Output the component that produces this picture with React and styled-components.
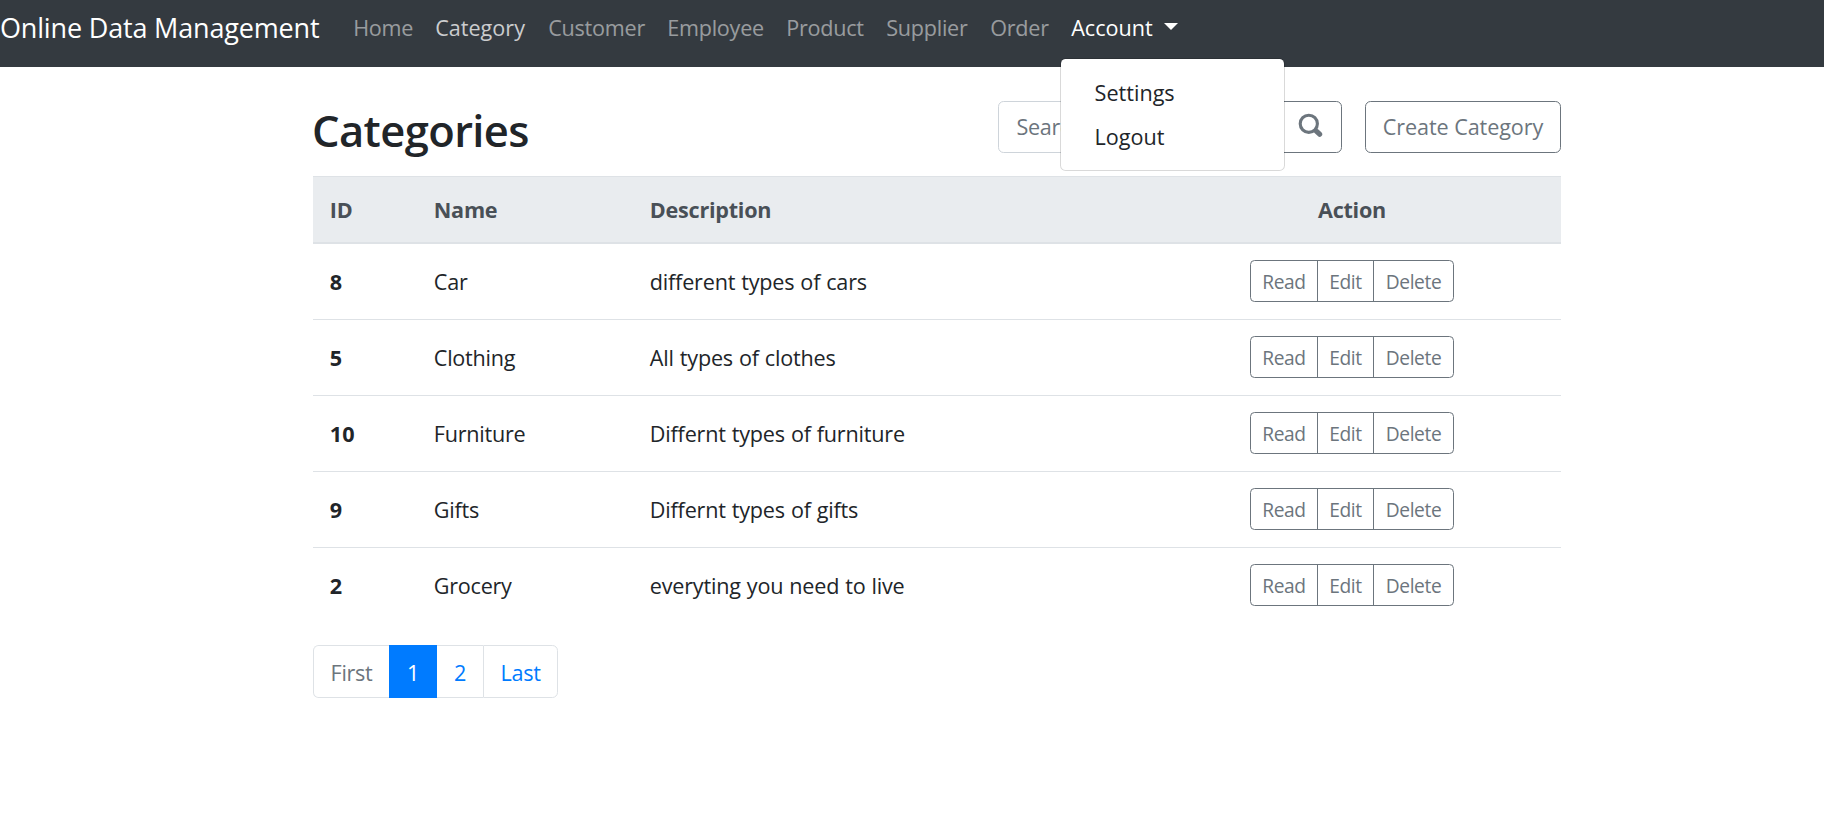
import React from "react";
import styled, { createGlobalStyle } from "styled-components";

const GlobalStyle = createGlobalStyle`
  *, *::before, *::after { box-sizing: border-box; }
  html, body { margin: 0; padding: 0; background: #fff; overflow: hidden; }
  body {
    font-family: "Segoe UI", "Open Sans", "Noto Sans", sans-serif;
    font-size: 21.6px;
    line-height: 33.6px;
    letter-spacing: -0.3px;
    color: #212529;
  }
  button, input { font: inherit; letter-spacing: inherit; }
  a { text-decoration: none; color: inherit; }
`;

const Navbar = styled.nav`
  display: flex;
  align-items: flex-start;
  height: 67px;
  background: #343a40;
  white-space: nowrap;
`;

const Brand = styled.a`
  width: 342px;
  padding-top: 7px;
  font-size: 27px;
  line-height: 42px;
  letter-spacing: -0.17px;
  color: #fff;
`;

const NavList = styled.ul`
  display: flex;
  margin: 0;
  padding: 0;
  list-style: none;
`;

const NavItem = styled.li`
  position: relative;
  width: ${(p) => p.$width}px;
`;

const NavLink = styled.a`
  display: flex;
  align-items: center;
  padding: 11px 11.2px;
  letter-spacing: ${(p) => (p.$active || p.$hover ? 0 : -0.25)}px;
  color: ${(p) => (p.$active ? "#fff" : p.$hover ? "rgba(255,255,255,.75)" : "rgba(255,255,255,.5)")};
`;

const Caret = styled.span`
  margin: -3px 0 0 11px;
  border-top: 7px solid currentColor;
  border-left: 7px solid transparent;
  border-right: 7px solid transparent;
`;

const Menu = styled.div`
  position: absolute;
  z-index: 10;
  top: 58px;
  left: 0;
  width: 225px;
  height: 113px;
  padding: 11.5px 0;
  background: #fff;
  background-clip: padding-box;
  border: 1px solid rgba(0, 0, 0, 0.15);
  border-radius: 5.6px;
`;

const MenuItem = styled.a`
  display: block;
  padding: 5.3px 33.6px;
  letter-spacing: 0;
  color: #212529;
`;

const Container = styled.main`
  width: 1248px;
  margin-left: 313px;
  padding-top: 34px;
`;

const Heading = styled.header`
  display: flex;
  align-items: flex-start;
  height: 75px;
`;

const Title = styled.h2`
  flex: 1;
  margin: 3px 0 0 -1px;
  font-size: 43.5px;
  line-height: 54px;
  font-weight: 600;
  letter-spacing: -0.6px;
`;

const SearchGroup = styled.div`
  display: flex;
  width: 344px;
  height: 52px;
  margin-right: 23px;
`;

const SearchInput = styled.input`
  flex: 1;
  min-width: 0;
  padding: 0 17.5px;
  color: #495057;
  border: 1px solid #ced4da;
  border-radius: 5.6px 0 0 5.6px;
  outline: none;
  &::placeholder { color: #6c757d; opacity: 1; }
`;

const OutlineButton = styled.button`
  display: flex;
  align-items: center;
  justify-content: center;
  width: ${(p) => p.$width}px;
  height: 52px;
  padding: 0;
  white-space: nowrap;
  letter-spacing: -0.1px;
  color: #6c757d;
  background: #fff;
  border: 1px solid #6c757d;
  border-radius: 5.6px;
`;

const SearchButton = styled(OutlineButton)`
  margin-left: -1px;
  padding: 0 1px 4px 0;
  border-radius: 0 5.6px 5.6px 0;
`;

const Table = styled.table`
  width: 100%;
  table-layout: fixed;
  border-collapse: collapse;
`;

const Column = styled.col`
  width: ${(p) => p.$width}px;
`;

const HeadCell = styled.th`
  height: 67px;
  padding: 0 16.8px;
  text-align: ${(p) => (p.$center ? "center" : "left")};
  font-weight: 700;
  letter-spacing: -0.25px;
  color: #495057;
  background: #e9ecef;
  box-shadow: inset 0 1px #dee2e6, inset 0 -1px #dee2e6;
`;

const Row = styled.tr`
  height: 76px;
  box-shadow: inset 0 1px #dee2e6;
`;

const Cell = styled.td`
  padding: 1px 16.8px 0;
  font-weight: ${(p) => (p.$bold ? 700 : 400)};
  letter-spacing: ${(p) => p.$track ?? 0}px;
  word-spacing: 0.6px;
`;

const ActionCell = styled(Cell)`
  padding-top: 0;
`;

const ButtonGroup = styled.div`
  display: flex;
  width: 204px;
  height: 42px;
  margin: 0 auto;
  border: 1px solid #6c757d;
  border-radius: 4.5px;
`;

const SmallButton = styled.button`
  width: ${(p) => p.$width}px;
  padding: 1px 0 0;
  font-size: 19.2px;
  line-height: 39px;
  letter-spacing: -0.4px;
  word-spacing: 0;
  color: #6c757d;
  background: none;
  border: 0;
  & + & { border-left: 1px solid #6c757d; }
`;

const Pagination = styled.ul`
  display: flex;
  width: 245px;
  height: 53px;
  margin: 22px 0 0;
  padding: 0;
  list-style: none;
`;

const PageItem = styled.li`
  display: flex;
  align-items: center;
  justify-content: center;
  width: ${(p) => p.$width}px;
  padding-top: 2px;
  color: ${(p) => (p.$active ? "#fff" : p.$disabled ? "#6c757d" : "#007bff")};
  background: ${(p) => (p.$active ? "#007bff" : "#fff")};
  border: 1px solid ${(p) => (p.$active ? "#007bff" : "#dee2e6")};
  ${(p) => (p.$active ? "" : "border-left-width: " + (p.$afterActive ? 0 : 1) + "px; border-right-width: " + (p.$last ? 1 : 0) + "px;")}
  &:first-child { border-radius: 5.6px 0 0 5.6px; }
  &:last-child { border-radius: 0 5.6px 5.6px 0; }
`;

const links = [
  { label: "Home", width: 82 },
  { label: "Category", width: 113, hover: true },
  { label: "Customer", width: 119 },
  { label: "Employee", width: 119 },
  { label: "Product", width: 100 },
  { label: "Supplier", width: 104 },
  { label: "Order", width: 81 },
];

const categories = [
  { id: 8, name: "Car", description: "different types of cars" },
  { id: 5, name: "Clothing", description: "All types of clothes" },
  { id: 10, name: "Furniture", description: "Differnt types of furniture" },
  { id: 9, name: "Gifts", description: "Differnt types of gifts" },
  { id: 2, name: "Grocery", description: "everyting you need to live" },
];

function SearchIcon() {
  return (
    <svg width="26" height="26" viewBox="0 0 26 26" fill="none" stroke="currentColor">
      <circle cx="11.8" cy="11.8" r="8.6" strokeWidth="3.1" />
      <path d="M19.6 19.4L22.6 22.2" strokeWidth="5.2" strokeLinecap="round" />
    </svg>
  );
}

export default function App() {
  return (
    <>
      <GlobalStyle />
      <Navbar>
        <Brand href="#">Online Data Management</Brand>
        <NavList>
          {links.map((l) => (
            <NavItem key={l.label} $width={l.width}>
              <NavLink href="#" $hover={l.hover}>{l.label}</NavLink>
            </NavItem>
          ))}
          <NavItem $width={130}>
            <NavLink href="#" $active>Account<Caret /></NavLink>
            <Menu>
              <MenuItem href="#">Settings</MenuItem>
              <MenuItem href="#">Logout</MenuItem>
            </Menu>
          </NavItem>
        </NavList>
      </Navbar>
      <Container>
        <Heading>
          <Title>Categories</Title>
          <SearchGroup>
            <SearchInput placeholder="Search" />
            <SearchButton $width={63} aria-label="Search"><SearchIcon /></SearchButton>
          </SearchGroup>
          <OutlineButton $width={196}>Create Category</OutlineButton>
        </Heading>
        <Table>
          <colgroup>
            <Column $width={104} />
            <Column $width={216} />
            <Column $width={510} />
            <Column $width={418} />
          </colgroup>
          <thead>
            <tr>
              <HeadCell>ID</HeadCell>
              <HeadCell>Name</HeadCell>
              <HeadCell>Description</HeadCell>
              <HeadCell $center>Action</HeadCell>
            </tr>
          </thead>
          <tbody>
            {categories.map((c) => (
              <Row key={c.id}>
                <Cell $bold>{c.id}</Cell>
                <Cell $track={-0.25}>{c.name}</Cell>
                <Cell $track={-0.2}>{c.description}</Cell>
                <ActionCell>
                  <ButtonGroup>
                    <SmallButton $width={66}>Read</SmallButton>
                    <SmallButton $width={56}>Edit</SmallButton>
                    <SmallButton $width={80}>Delete</SmallButton>
                  </ButtonGroup>
                </ActionCell>
              </Row>
            ))}
          </tbody>
        </Table>
        <Pagination>
          <PageItem $width={76} $disabled>First</PageItem>
          <PageItem $width={48} $active>1</PageItem>
          <PageItem $width={46} $afterActive>2</PageItem>
          <PageItem $width={75} $last>Last</PageItem>
        </Pagination>
      </Container>
    </>
  );
}
